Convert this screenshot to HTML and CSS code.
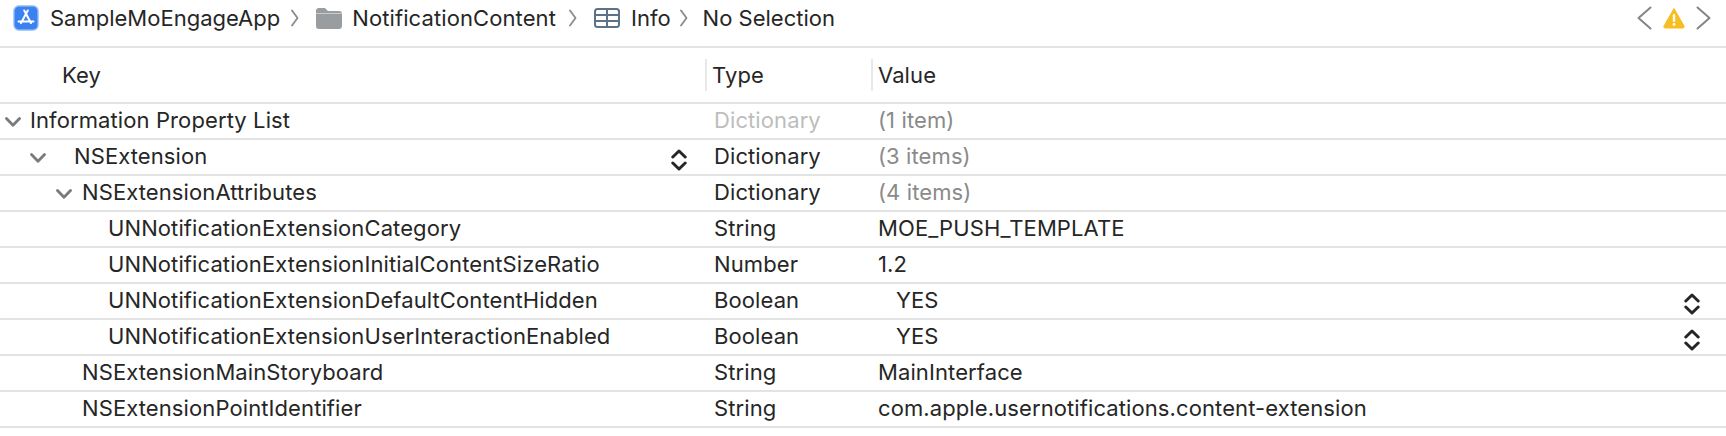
FILE: index.html
```html
<!DOCTYPE html>
<html lang="en">
<head>
<meta charset="utf-8">
<title>Info</title>
<link rel="stylesheet" href="styles.css">
</head>
<body>
<svg class="defs" width="0" height="0" aria-hidden="true">
  <symbol id="down" viewBox="0 0 16 10"><path d="M1.500 1.500 8 8.200l6.500-6.700" fill="none" stroke="#7a7a7a" stroke-width="2.800" stroke-linecap="round" stroke-linejoin="round"/></symbol>
  <symbol id="sep" viewBox="0 0 8 18"><path d="M1 1.500 6.500 9 1 16.500" fill="none" stroke="#8a8a8a" stroke-width="1.800" stroke-linecap="round" stroke-linejoin="round"/></symbol>
  <symbol id="step" viewBox="0 0 16 22"><path d="M1.800 8 8 2l6.200 6M1.800 14 8 20l6.200-6" fill="none" stroke="#262626" stroke-width="3" stroke-linecap="round" stroke-linejoin="round"/></symbol>
</svg>
<nav class="crumbs">
  <svg class="ic-app" viewBox="0 0 26 26"><rect x="1" y="1" width="24" height="24" rx="5" fill="#3b82f0" stroke="#8db8f5" stroke-width="1.400"/><path d="M14.800 5.500 8 18M11.200 5.500 18 18M5.500 16.500h15" fill="none" stroke="#fff" stroke-width="2" stroke-linecap="round"/></svg>
  <span class="c-app">SampleMoEngageApp</span>
  <svg class="sep s1"><use href="#sep"/></svg>
  <svg class="ic-folder" viewBox="0 0 26 21"><path d="M0 3a3 3 0 0 1 3-3h6l3 3h11a3 3 0 0 1 3 3v12a3 3 0 0 1-3 3H3a3 3 0 0 1-3-3z" fill="#9a9d9f"/><rect x="0" y="5" width="26" height="1" fill="#c9cbcc"/></svg>
  <span class="c-folder">NotificationContent</span>
  <svg class="sep s2"><use href="#sep"/></svg>
  <svg class="ic-table" viewBox="0 0 26 20"><rect x="1" y="1" width="24" height="18" rx="2.500" fill="none" stroke="#5b7288" stroke-width="2"/><path d="M1 7h24M1 13h24M13 1v18" stroke="#5b7288" stroke-width="2"/></svg>
  <span class="c-info">Info</span>
  <svg class="sep s3"><use href="#sep"/></svg>
  <span class="c-none">No Selection</span>
  <span class="nav">
    <svg class="nav-arrow" viewBox="0 0 15 24"><path d="M13.500 1.500 1.500 12l12 10.500" fill="none" stroke="#858585" stroke-width="2" stroke-linecap="round" stroke-linejoin="round"/></svg>
    <svg class="warn" viewBox="0 0 22 22"><path d="M11 1.500 21 19a1.300 1.300 0 0 1-1.100 2H2.100A1.300 1.300 0 0 1 1 19z" fill="#f8bd1f" stroke="#f8bd1f" stroke-linejoin="round"/><rect x="9.800" y="7" width="2.400" height="8" rx="1.200" fill="#fff"/><circle cx="11" cy="17.500" r="1.400" fill="#fff"/></svg>
    <svg class="nav-arrow" viewBox="0 0 15 24"><path d="M1.500 1.500 13.500 12l-12 10.500" fill="none" stroke="#858585" stroke-width="2" stroke-linecap="round" stroke-linejoin="round"/></svg>
  </span>
</nav>
<main class="plist">
  <div class="row head">
    <div class="key k-head">Key</div>
    <div class="type"><span class="h-cell">Type</span></div>
    <div class="value"><span class="h-cell">Value</span></div>
  </div>
  <div class="row">
    <div class="key l0"><svg class="disc"><use href="#down"/></svg>Information Property List</div>
    <div class="type muted">Dictionary</div>
    <div class="value dim">(1 item)</div>
  </div>
  <div class="row">
    <div class="key l1"><svg class="disc"><use href="#down"/></svg><span class="grow">NSExtension</span><svg class="step"><use href="#step"/></svg></div>
    <div class="type">Dictionary</div>
    <div class="value dim">(3 items)</div>
  </div>
  <div class="row">
    <div class="key l2"><svg class="disc"><use href="#down"/></svg>NSExtensionAttributes</div>
    <div class="type">Dictionary</div>
    <div class="value dim">(4 items)</div>
  </div>
  <div class="row">
    <div class="key l3">UNNotificationExtensionCategory</div>
    <div class="type">String</div>
    <div class="value">MOE_PUSH_TEMPLATE</div>
  </div>
  <div class="row">
    <div class="key l3">UNNotificationExtensionInitialContentSizeRatio</div>
    <div class="type">Number</div>
    <div class="value">1.2</div>
  </div>
  <div class="row">
    <div class="key l3">UNNotificationExtensionDefaultContentHidden</div>
    <div class="type">Boolean</div>
    <div class="value bool"><span class="grow">YES</span><svg class="step"><use href="#step"/></svg></div>
  </div>
  <div class="row">
    <div class="key l3">UNNotificationExtensionUserInteractionEnabled</div>
    <div class="type">Boolean</div>
    <div class="value bool"><span class="grow">YES</span><svg class="step"><use href="#step"/></svg></div>
  </div>
  <div class="row">
    <div class="key l4">NSExtensionMainStoryboard</div>
    <div class="type">String</div>
    <div class="value">MainInterface</div>
  </div>
  <div class="row">
    <div class="key l4">NSExtensionPointIdentifier</div>
    <div class="type">String</div>
    <div class="value">com.apple.usernotifications.content-extension</div>
  </div>
</main>
</body>
</html>
```
FILE: styles.css
```css
* { box-sizing: border-box; }
html, body { margin: 0; padding: 0; background: #fff; }
body {
  width: 1726px;
  height: 436px;
  overflow: hidden;
  font-family: Inter, "Liberation Sans", sans-serif;
  font-size: 22px;
  color: #262626;
}
.defs { position: absolute; }
.crumbs {
  height: 48px;
  display: flex;
  align-items: center;
  padding: 0 15px 10px 13px;
  border-bottom: 2px solid #e3e3e3;
}
.ic-app { width: 26px; height: 26px; margin-right: 11px; }
.ic-folder { width: 26px; height: 21px; margin-right: 10px; }
.ic-table { width: 26px; height: 20px; margin-right: 11px; }
.sep { width: 8px; height: 18px; margin: 0 17px 0 11px; }
.s2 { margin: 0 17px 0 13px; }
.s3 { margin: 0 15px 0 9px; }
.c-folder { letter-spacing: 0.1px; }
.nav { margin-left: auto; display: flex; align-items: center; gap: 11px; }
.nav-arrow { width: 15px; height: 24px; }
.warn { width: 22px; height: 22px; }
.row {
  display: grid;
  grid-template-columns: 705px 166px 1fr;
  height: 36px;
  align-items: center;
  padding-bottom: 2px;
  border-bottom: 2px solid #e3e3e3;
  letter-spacing: 0.1px;
}
.head { height: 56px; padding-bottom: 0; }
.key, .value.bool { display: flex; align-items: center; }
.k-head { padding-left: 62px; }
.type { padding-left: 9px; }
.value { padding-left: 7px; }
.head .type, .head .value { padding-left: 0; }
.h-cell {
  display: flex;
  align-items: center;
  height: 32px;
  padding-left: 5px;
  border-left: 2px solid #e8e8e8;
}
.muted { color: #bdbdbd; }
.dim { color: #8a8a8a; }
.grow { flex: 1; }
.disc { width: 16px; height: 10px; flex: none; margin-top: 4px; }
.l0 { padding-left: 5px; }
.l0 .disc { margin-right: 9px; }
.l1 { padding-left: 30px; padding-right: 18px; }
.l1 .disc { margin-right: 28px; }
.l2 { padding-left: 56px; }
.l2 .disc { margin-right: 10px; }
.l3 { padding-left: 108px; }
.l4 { padding-left: 82px; }
.step { width: 16px; height: 22px; flex: none; margin-top: 7px; }
.bool { padding-right: 26px; }
.bool .grow { padding-left: 18px; }
```
